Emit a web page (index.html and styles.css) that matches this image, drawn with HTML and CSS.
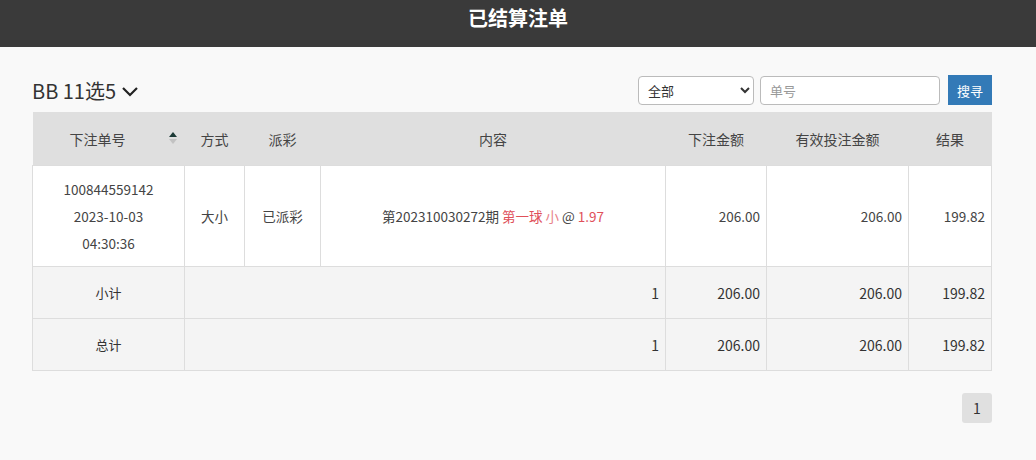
FILE: index.html
```html
<!DOCTYPE html>
<html lang="zh">
<head>
    <meta charset="UTF-8">
    <meta name="viewport" content="width=device-width, initial-scale=1.0">
    <title>已结算注单</title>
    <link rel="stylesheet" href="styles.css">
</head>
<body>
    <header class="topbar">
        <h1>已结算注单</h1>
    </header>
    <div class="container">
        <div class="toolbar">
            <div class="game-name">
                BB 11选5
                <svg class="chevron" width="18" height="12" viewBox="0 0 18 12">
                    <path d="M2 3 L9 10 L16 3" fill="none" stroke="#222" stroke-width="2.2"/>
                </svg>
            </div>
            <div class="filters">
                <select class="filter-select">
                    <option>全部</option>
                </select>
                <input class="filter-input" type="text" placeholder="单号">
                <button class="btn-search">搜寻</button>
            </div>
        </div>

        <table class="bets">
            <colgroup>
                <col style="width:152px">
                <col style="width:60px">
                <col style="width:76px">
                <col style="width:345px">
                <col style="width:101px">
                <col style="width:142px">
                <col>
            </colgroup>
            <thead>
                <tr>
                    <th class="sortable">下注单号<span class="sort"><i class="up"></i><i class="down"></i></span></th>
                    <th>方式</th>
                    <th>派彩</th>
                    <th>内容</th>
                    <th>下注金额</th>
                    <th>有效投注金额</th>
                    <th>结果</th>
                </tr>
            </thead>
            <tbody>
                <tr class="bet-row">
                    <td class="center">100844559142<br>2023-10-03<br>04:30:36</td>
                    <td class="center">大小</td>
                    <td class="center">已派彩</td>
                    <td class="center">第202310030272期 <span class="red">第一球</span> <span class="pink">小</span> @ <span class="red">1.97</span></td>
                    <td class="num">206.00</td>
                    <td class="num">206.00</td>
                    <td class="num">199.82</td>
                </tr>
                <tr class="sum-row">
                    <td class="center">小计</td>
                    <td class="num" colspan="3">1</td>
                    <td class="num">206.00</td>
                    <td class="num">206.00</td>
                    <td class="num">199.82</td>
                </tr>
                <tr class="sum-row">
                    <td class="center">总计</td>
                    <td class="num" colspan="3">1</td>
                    <td class="num">206.00</td>
                    <td class="num">206.00</td>
                    <td class="num">199.82</td>
                </tr>
            </tbody>
        </table>

        <div class="pager">
            <span class="page">1</span>
        </div>
    </div>
</body>
</html>
```

FILE: styles.css
```css
body {
    margin: 0;
    background: #f9f9f9;
    font-family: "Noto Sans CJK SC", "Noto Sans", sans-serif;
    color: #333;
}
.topbar {
    height: 47px;
    background: #3a3a3a;
    text-align: center;
}
.topbar h1 {
    margin: 0;
    line-height: 36px;
    font-size: 20px;
    font-weight: bold;
    color: #fff;
}
.container {
    width: 960px;
    margin-left: 32px;
    padding-top: 28px;
}
.toolbar {
    display: flex;
    justify-content: space-between;
    align-items: center;
    height: 30px;
    margin-bottom: 7px;
}
.game-name {
    display: flex;
    align-items: center;
    gap: 5px;
    font-size: 20px;
    color: #333;
    padding-top: 1px;
}
.chevron {
    margin-top: 1px;
}
.filters {
    display: flex;
    align-items: center;
}
.filter-select {
    width: 116px;
    height: 29px;
    border: 1px solid #bbb;
    border-radius: 4px;
    background: #fff;
    font-family: inherit;
    font-size: 13px;
    color: #333;
    padding: 0 5px;
}
.filter-input {
    width: 180px;
    height: 29px;
    box-sizing: border-box;
    margin-left: 6px;
    border: 1px solid #bbb;
    border-radius: 4px;
    padding: 0 9px;
    font-family: inherit;
    font-size: 13px;
}
.filter-input::placeholder {
    color: #999;
}
.btn-search {
    width: 44px;
    height: 30px;
    margin-left: 8px;
    border: none;
    background: #337ab7;
    color: #fff;
    font-family: inherit;
    font-size: 13px;
    padding: 0;
}
.bets {
    width: 960px;
    table-layout: fixed;
    border-collapse: collapse;
    font-size: 13.5px;
}
.bets th {
    height: 53px;
    background: #dfdfdf;
    font-weight: normal;
    font-size: 14px;
    color: #444;
    border-bottom: 1px solid #ddd;
    padding: 0;
}
.bets td {
    border: 1px solid #ddd;
    padding: 0 6px;
}
.sortable {
    position: relative;
    padding-right: 22px !important;
}
.sort {
    position: absolute;
    right: 8px;
    top: 20px;
}
.sort i {
    display: block;
    width: 0;
    height: 0;
    border-left: 4px solid transparent;
    border-right: 4px solid transparent;
}
.sort .up {
    border-bottom: 5px solid #1c3a36;
    margin-bottom: 2px;
}
.sort .down {
    border-top: 5px solid #c2c2c2;
}
.bet-row td {
    height: 100px;
    background: #fff;
    line-height: 27px;
    color: #444;
}
.sum-row td {
    height: 51px;
    background: #f4f4f4;
    font-size: 14px;
    color: #333;
}
.sum-row td.center {
    font-size: 13px;
}
.center {
    text-align: center;
}
.num {
    text-align: right;
}
.red {
    color: #e0505a;
}
.pink {
    color: #e8828a;
}
.pager {
    display: flex;
    justify-content: flex-end;
    margin-top: 22px;
}
.page {
    width: 30px;
    height: 30px;
    line-height: 30px;
    text-align: center;
    background: #e0e0e0;
    border-radius: 3px;
    font-size: 14px;
    color: #333;
}
```
